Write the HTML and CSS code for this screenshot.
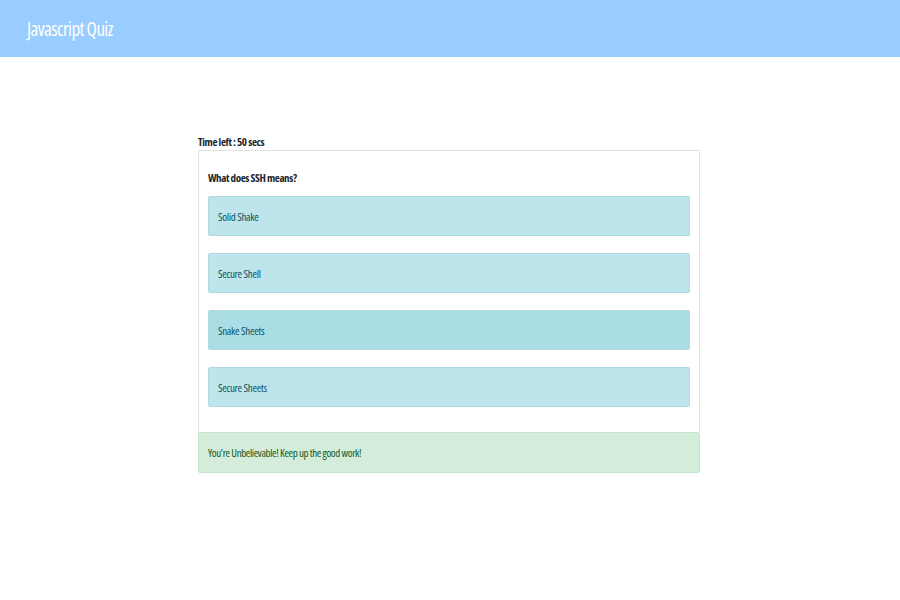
FILE: index.html
```html
<!DOCTYPE html>
<html>
<head>
<meta charset="utf-8">
<link rel="stylesheet" href="styles.css">
</head>
<body>
<header class="navbar"><span class="brand">Javascript Quiz</span></header>
<main class="container">
  <div class="timer">Time left : 50 secs</div>
  <div class="card">
    <div class="question">What does SSH means?</div>
    <ul class="options">
      <li class="option">Solid Shake</li>
      <li class="option">Secure Shell</li>
      <li class="option active">Snake Sheets</li>
      <li class="option">Secure Sheets</li>
    </ul>
  </div>
  <div class="result">You're Unbelievable! Keep up the good work!</div>
</main>
</body>
</html>
```
FILE: styles.css
```css
* { box-sizing: border-box; }
body {
  margin: 0;
  font-family: "Open Sans", "Noto Sans", sans-serif;
  font-stretch: 75%;
  background: #fff;
  color: #212529;
}
.navbar {
  height: 57px;
  background: #99ccff;
  display: flex;
  align-items: center;
  padding: 0 27px;
}
.brand {
  color: #fff;
  font-size: 19px;
  letter-spacing: -0.6px;
}
.container {
  width: 502px;
  margin: 0 auto;
  padding-top: 76px;
  position: relative;
  left: -1px;
}
.timer {
  font-weight: 700;
  font-size: 11px;
  letter-spacing: -0.4px;
  height: 17px;
  line-height: 17px;
}
.card {
  border: 1px solid #e2e2e2;
  border-bottom: none;
  padding: 19px 9px 25px 9px;
}
.question {
  font-weight: 700;
  font-size: 11px;
  letter-spacing: -0.4px;
  line-height: 15px;
  margin-bottom: 11px;
}
.options {
  list-style: none;
  margin: 0;
  padding: 0;
  display: flex;
  flex-direction: column;
  gap: 17px;
}
.option {
  height: 40px;
  background: #bee5eb;
  border: 1px solid #b0d9e0;
  border-radius: 2px;
  color: #0c5460;
  font-size: 11px;
  letter-spacing: -0.3px;
  display: flex;
  align-items: center;
  padding-left: 9px;
}
.option.active {
  background: #abdde5;
}
.result {
  height: 41px;
  background: #d4edda;
  border: 1px solid #c3e6cb;
  border-radius: 2px;
  color: #155724;
  font-size: 11px;
  letter-spacing: -0.4px;
  display: flex;
  align-items: center;
  padding-left: 9px;
}
```
